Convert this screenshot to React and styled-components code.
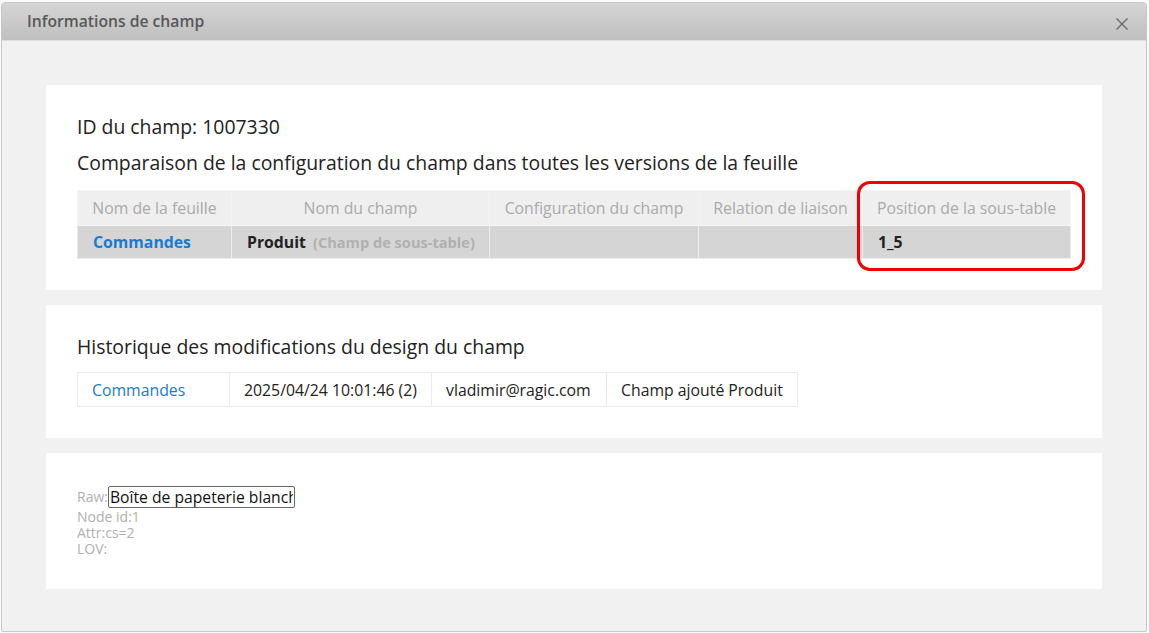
import React from 'react';
import styled, { createGlobalStyle } from 'styled-components';

const GlobalStyle = createGlobalStyle`
  html, body {
    margin: 0;
    padding: 0;
    background: #fafafa;
    font-family: "Open Sans", "Noto Sans", sans-serif;
  }
`;

const Dialog = styled.div`
  margin: 2px 0 0 1px;
  width: 1144px;
  height: 628px;
  border: 1px solid #c8c8c8;
  border-radius: 4px 4px 2px 2px;
  background: #f1f1f1;
  overflow: hidden;
  display: flex;
  flex-direction: column;
`;

const TitleBar = styled.div`
  height: 38px;
  flex-shrink: 0;
  display: flex;
  align-items: center;
  justify-content: space-between;
  padding: 0 17px 0 25px;
  background: linear-gradient(#d5d5d5, #bfbfbf);
  border-bottom: 1px solid #e0e0e0;
  box-sizing: border-box;
`;

const Title = styled.div`
  font-size: 15.7px;
  font-weight: 600;
  color: #585858;
  padding-bottom: 2px;
`;

const CloseButton = styled.button`
  border: 0;
  background: none;
  padding: 0;
  margin-top: 4px;
  width: 14px;
  height: 14px;
  display: flex;
  cursor: pointer;
`;

const Body = styled.div`
  padding: 44px 44px 0 44px;
  display: flex;
  flex-direction: column;
  gap: 15px;
`;

const Card = styled.div`
  position: relative;
  background: #fff;
  padding: ${(p) => p.$pad || '28px 31px 31px'};
`;

const Heading = styled.div`
  font-size: 19.4px;
  line-height: 28px;
  color: #222;
  & + & {
    margin-top: 8px;
  }
`;

const Table = styled.table`
  border-collapse: collapse;
  margin-top: ${(p) => p.$mt || '13px'};
  width: ${(p) => p.$w}px;
  font-size: 15.8px;
  table-layout: fixed;
`;

const Th = styled.th`
  background: #efefef;
  color: #aaa;
  font-weight: 400;
  text-align: center;
  height: 34px;
  padding: 0 4px;
  border: 1px solid #f4f4f4;
  white-space: nowrap;
  overflow: hidden;
`;

const Td = styled.td`
  background: ${(p) => (p.$filled ? '#d5d5d5' : '#fff')};
  border: 1px solid ${(p) => (p.$filled ? '#ececec' : '#ebebeb')};
  height: ${(p) => (p.$filled ? '32px' : '33px')};
  padding: 0 0 0 ${(p) => (p.$filled ? '15px' : '14px')};
  white-space: nowrap;
  overflow: hidden;
  color: #222;
  font-weight: ${(p) => (p.$bold ? 700 : 400)};
`;

const Link = styled.a`
  color: #1b7bd0;
  text-decoration: none;
  font-weight: ${(p) => (p.$bold ? 700 : 400)};
`;

const Hint = styled.span`
  color: #b0b0b0;
  font-size: 14.6px;
  font-weight: 700;
  margin-left: 7px;
`;

const Highlight = styled.div`
  position: absolute;
  left: 811px;
  top: 96px;
  width: 222px;
  height: 84px;
  border: 3px solid #f00000;
  border-radius: 13px;
  pointer-events: none;
`;

const Meta = styled.div`
  font-size: 14px;
  line-height: 16px;
  color: #b0b0b0;
`;

const RawRow = styled.div`
  display: flex;
  align-items: center;
  margin-bottom: 1px;
`;

const RawInput = styled.input`
  width: 187px;
  height: 22px;
  box-sizing: border-box;
  border: 1px solid #666;
  border-radius: 2px;
  padding: 0 1px;
  font-family: "Open Sans", "Noto Sans", sans-serif;
  font-size: 15.7px;
  color: #111;
  background: #fff;
  outline: none;
`;

const compareCols = [154, 258, 209, 164, 208];
const compareHead = [
  'Nom de la feuille',
  'Nom du champ',
  'Configuration du champ',
  'Relation de liaison',
  'Position de la sous-table',
];

const historyCols = [152, 202, 175, 191];
const history = ['2025/04/24 10:01:46 (2)', 'vladimir@ragic.com', 'Champ ajouté Produit'];

const sum = (a) => a.reduce((s, v) => s + v, 0);

export default function App() {
  return (
    <>
      <GlobalStyle />
      <Dialog>
        <TitleBar>
          <Title>Informations de champ</Title>
          <CloseButton aria-label="Fermer">
            <svg width="14" height="14" viewBox="0 0 14 14">
              <path d="M1.5 1.5 L12.5 12.5 M12.5 1.5 L1.5 12.5" stroke="#666" strokeWidth="1.3" fill="none" />
            </svg>
          </CloseButton>
        </TitleBar>
        <Body>
          <Card>
            <Heading>ID du champ: 1007330</Heading>
            <Heading>Comparaison de la configuration du champ dans toutes les versions de la feuille</Heading>
            <Table $w={sum(compareCols)}>
              <colgroup>
                {compareCols.map((w, i) => (
                  <col key={i} style={{ width: w }} />
                ))}
              </colgroup>
              <thead>
                <tr>
                  {compareHead.map((h) => (
                    <Th key={h}>{h}</Th>
                  ))}
                </tr>
              </thead>
              <tbody>
                <tr>
                  <Td $filled>
                    <Link href="#" $bold>Commandes</Link>
                  </Td>
                  <Td $filled $bold>
                    Produit<Hint>(Champ de sous-table)</Hint>
                  </Td>
                  <Td $filled />
                  <Td $filled />
                  <Td $filled $bold>1_5</Td>
                </tr>
              </tbody>
            </Table>
            <Highlight />
          </Card>

          <Card>
            <Heading>Historique des modifications du design du champ</Heading>
            <Table $mt="11px" $w={sum(historyCols)}>
              <colgroup>
                {historyCols.map((w, i) => (
                  <col key={i} style={{ width: w }} />
                ))}
              </colgroup>
              <tbody>
                <tr>
                  <Td>
                    <Link href="#">Commandes</Link>
                  </Td>
                  {history.map((v) => (
                    <Td key={v}>{v}</Td>
                  ))}
                </tr>
              </tbody>
            </Table>
          </Card>

          <Card $pad="33px 31px 32px">
            <RawRow>
              <Meta>Raw:</Meta>
              <RawInput readOnly defaultValue="Boîte de papeterie blanche" />
            </RawRow>
            <Meta>Node id:1</Meta>
            <Meta>Attr:cs=2</Meta>
            <Meta>LOV:</Meta>
          </Card>
        </Body>
      </Dialog>
    </>
  );
}
